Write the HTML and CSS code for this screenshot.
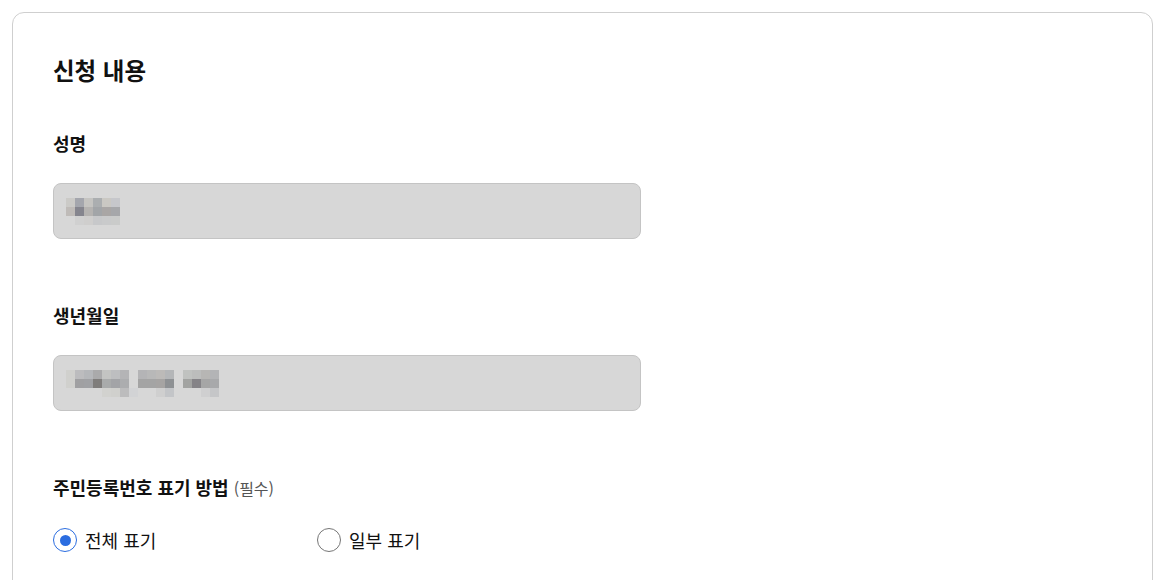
FILE: index.html
```html
<!DOCTYPE html>
<html lang="ko">
  <head>
    <meta charset="UTF-8" />
    <meta name="viewport" content="width=device-width, initial-scale=1.0" />
    <title>신청 내용</title>
    <link rel="stylesheet" href="styles.css">
  </head>
  <body>
    <section class="card">
      <h2 class="card-title">신청 내용</h2>

      <div class="field">
        <div class="field-label">성명</div>
        <div class="field-input">
          <div class="masked" id="mask-name"></div>
        </div>
      </div>

      <div class="field">
        <div class="field-label">생년월일</div>
        <div class="field-input">
          <div class="masked" id="mask-birth"></div>
        </div>
      </div>

      <div class="field">
        <div class="field-label">주민등록번호 표기 방법 <span class="required">(필수)</span></div>
        <div class="radio-group">
          <label class="radio checked">
            <span class="radio-circle"></span>
            <span>전체 표기</span>
          </label>
          <label class="radio">
            <span class="radio-circle"></span>
            <span>일부 표기</span>
          </label>
        </div>
      </div>
    </section>

    <script>
      // blurred (pixelated) values, one row per string, "-" = empty cell
      const masks = {
        "mask-name": [
          ["cbcac7", "a4a6ad", "c5c4c1", "abaeb0", "cac8c3", "c6c7cb"],
          ["bfbbb8", "85858e", "b5b3b1", "a2a5a8", "a9a6a5", "a6a7aa"],
          ["-", "d0d0d0", "cfcecd", "c7c8ca", "c9cacb", "cacbca"],
        ],
        "mask-birth": [
          ["d0d0cd", "bcbcbe", "b5b7ba", "aaaaab", "c3c4c2", "bdbec0", "b4b4b6", "-",
           "b4b4b6", "b8b8b8", "bcbab8", "b4b6b8", "-", "c0c2c0", "bcbdbc", "b7b6b4", "b3b4b6"],
          ["d0d0cd", "a0a0a2", "a0a1a4", "7f7d7b", "a9abab", "a3a4a7", "acadaf", "-",
           "a4a4a4", "a4a4a4", "a6a4a3", "8e9194", "-", "a2a3a1", "858387", "a6a6a6", "a8a9ab"],
          ["-", "-", "-", "-", "d2d2cf", "d0d0cd", "bcbcbd", "d2d3d5",
           "-", "-", "cfcfcf", "c3c5c8", "-", "-", "-", "cfcfd0", "c5c6c8"],
        ],
      };

      Object.keys(masks).forEach((id) => {
        const box = document.getElementById(id);
        const rows = masks[id];
        box.style.gridTemplateColumns = `repeat(${rows[0].length}, 9px)`;
        rows.forEach((row) => {
          row.forEach((color) => {
            const cell = document.createElement("span");
            if (color !== "-") cell.style.background = "#" + color;
            box.appendChild(cell);
          });
        });
      });
    </script>
  </body>
</html>
```

FILE: styles.css
```css
body {
  font-family: "Noto Sans CJK KR", "Noto Sans", sans-serif;
  background-color: #ffffff;
  color: #111111;
  margin: 0;
  padding: 12px;
}
.card {
  border: 1px solid #cfcfcf;
  border-radius: 12px;
  padding: 41px 40px 60px;
}
.card-title {
  font-size: 23.5px;
  font-weight: 700;
  line-height: 32px;
  margin: 0 0 45px;
}
.field {
  margin-bottom: 64px;
}
.field-label {
  font-size: 18px;
  font-weight: 700;
  line-height: 24px;
  margin-bottom: 28px;
}
.required {
  font-size: 16px;
  font-weight: 400;
  color: #555555;
}
.field-input {
  width: 574px;
  height: 54px;
  background: #d7d7d7;
  border: 1px solid #c4c4c4;
  border-radius: 8px;
  display: flex;
  align-items: center;
  padding-left: 12px;
}
.masked {
  display: grid;
  grid-auto-rows: 9px;
}
.radio-group {
  display: grid;
  grid-template-columns: 264px 264px;
}
.radio {
  display: flex;
  align-items: center;
  gap: 8px;
  font-size: 18px;
  line-height: 24px;
  cursor: pointer;
}
.radio-circle {
  width: 22px;
  height: 22px;
  border: 1px solid #767676;
  border-radius: 50%;
  display: flex;
  align-items: center;
  justify-content: center;
  box-sizing: content-box;
}
.radio.checked .radio-circle {
  border-color: #2b6de0;
}
.radio.checked .radio-circle::after {
  content: "";
  width: 11px;
  height: 11px;
  border-radius: 50%;
  background: #2b6de0;
}
```
